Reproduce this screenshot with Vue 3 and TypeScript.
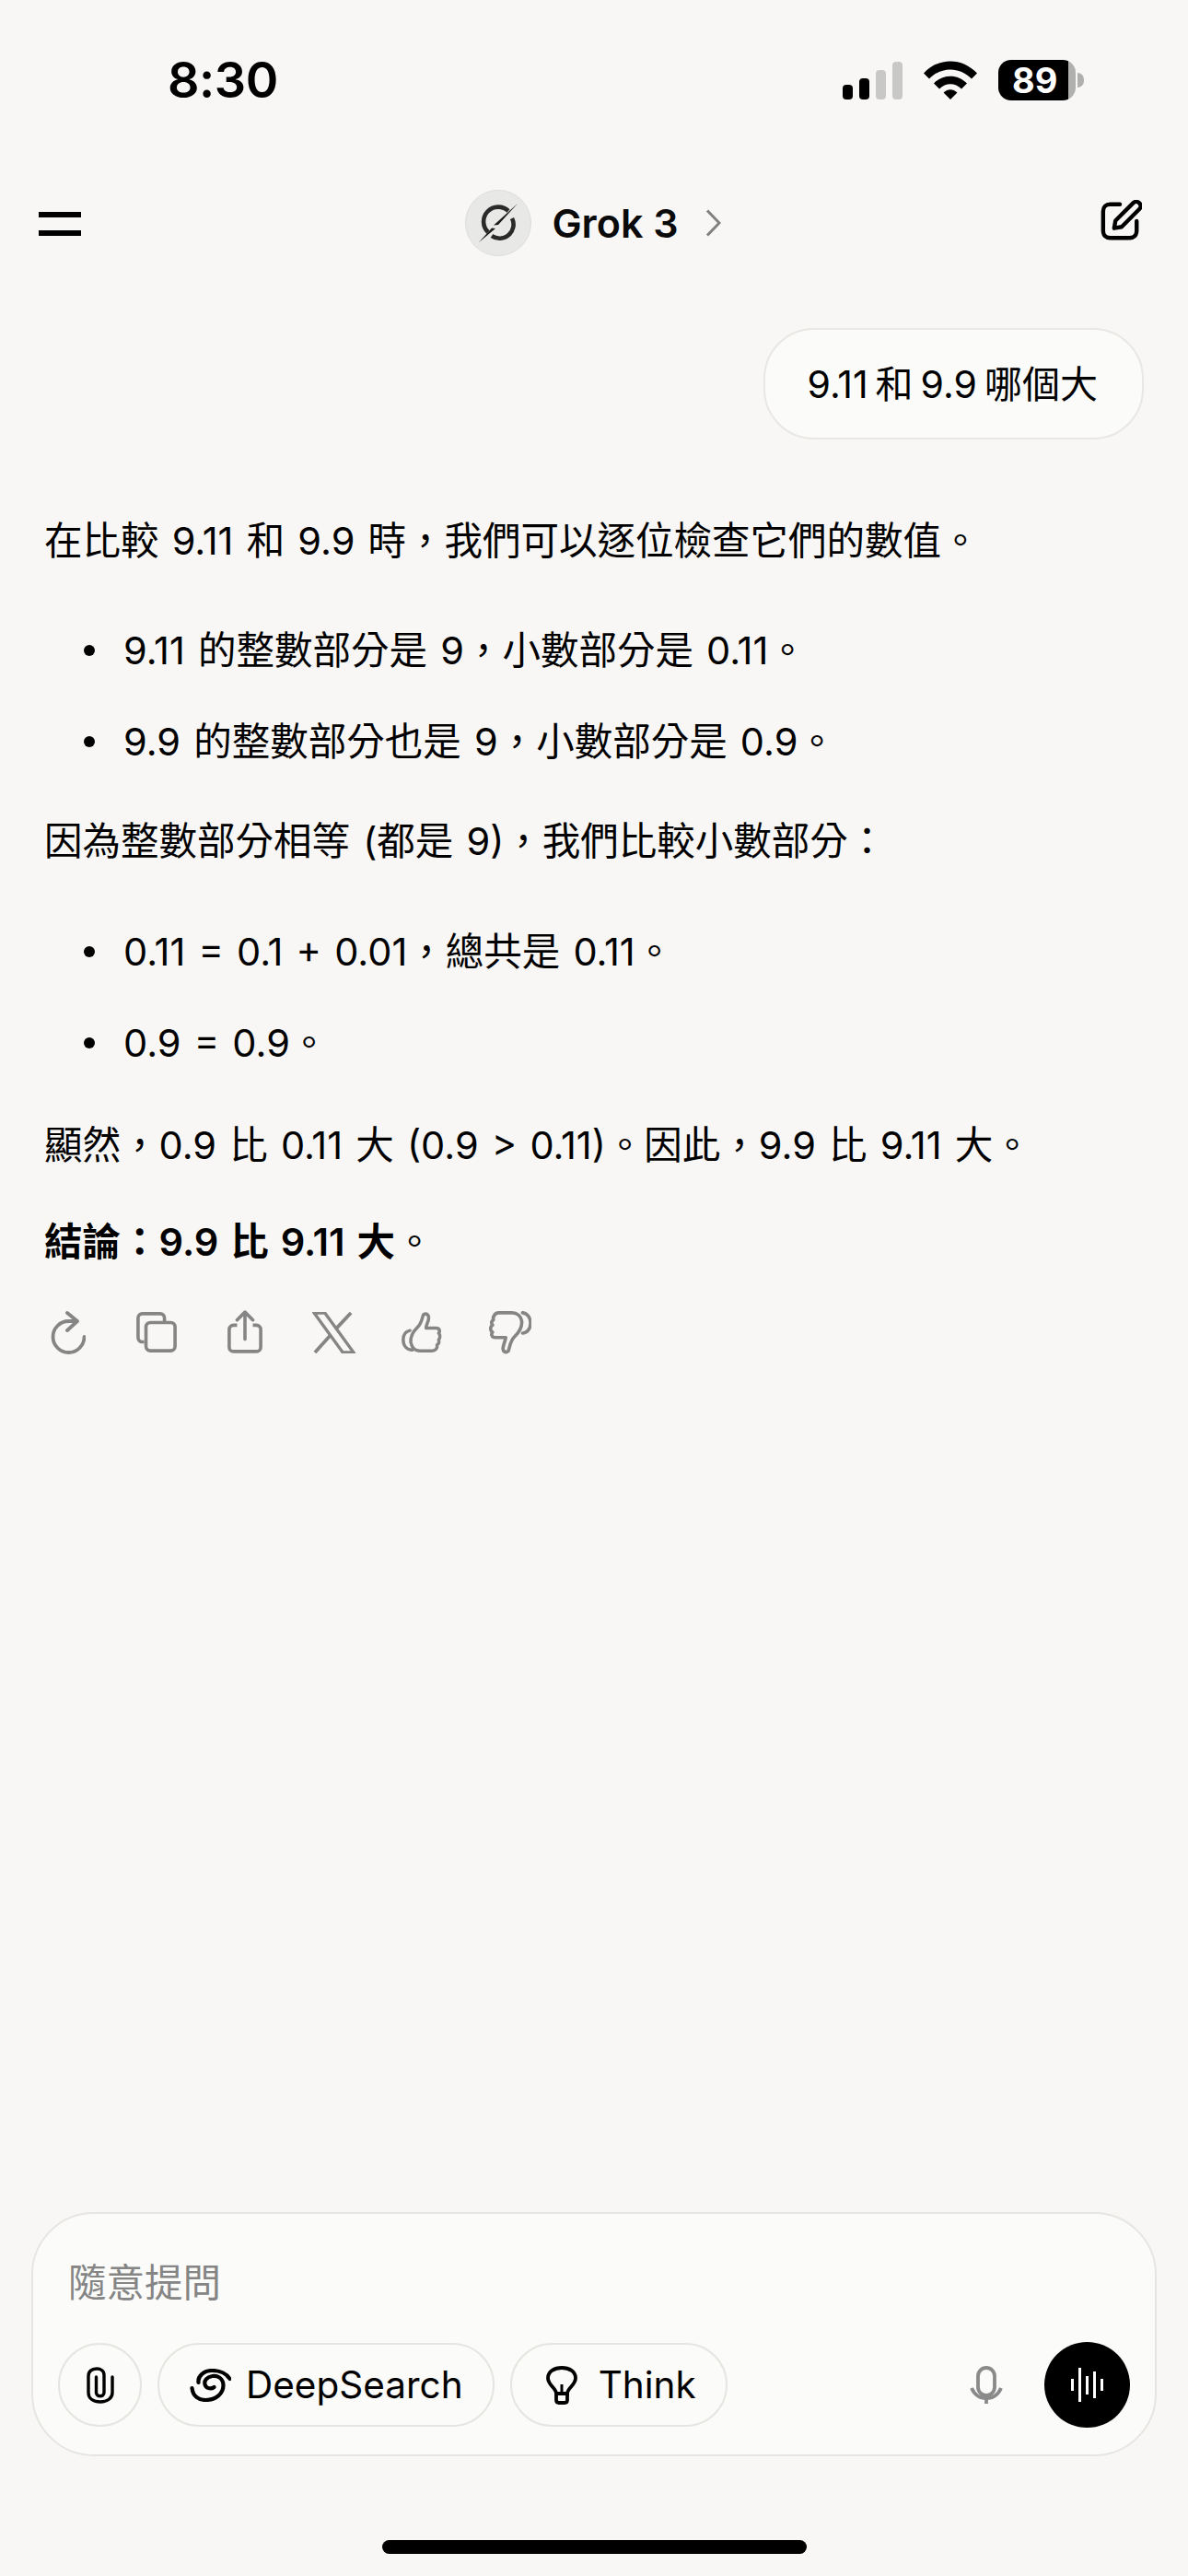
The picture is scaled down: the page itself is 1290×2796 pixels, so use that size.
<script setup lang="ts">
const firstList: string[] = ['9.11 的整數部分是 9，小數部分是 0.11。', '9.9 的整數部分也是 9，小數部分是 0.9。']
const secondList: string[] = ['0.11 = 0.1 + 0.01，總共是 0.11。', '0.9 = 0.9。']
</script>

<template>
  <div class="screen" lang="zh-Hant">
    <div class="status">
      <span class="time">8:30</span>
      <div class="status-icons">
        <svg width="65" height="41" viewBox="0 0 65 41" class="signal">
          <rect x="0" y="25" width="11" height="16" rx="4" fill="#000" />
          <rect x="18" y="18" width="11" height="23" rx="4" fill="#000" />
          <rect x="36" y="9" width="11" height="32" rx="4" fill="#c8c8c6" />
          <rect x="54" y="0" width="11" height="41" rx="4" fill="#c8c8c6" />
        </svg>
        <svg width="58" height="42" viewBox="0 0 58 42" class="wifi">
          <path d="M0 13.5C16 -4 42 -4 58 13.5L52 19.5C39 6 19 6 6 19.5Z" fill="#000" />
          <path d="M11 24.5C21 14 37 14 47 24.5L41 30.5C34 23.5 24 23.5 17 30.5Z" fill="#000" />
          <path d="M21.5 34.5C26 30 32 30 36.5 34.5L29 42Z" fill="#000" />
        </svg>
        <div class="battery">
          <div class="battery-body"><span>89</span></div>
          <i class="battery-cap"></i>
        </div>
      </div>
    </div>

    <div class="nav">
      <div class="menu"><i></i><i></i></div>
      <div class="model">
        <div class="model-logo">
          <svg width="46" height="46" viewBox="0 0 46 46">
            <path d="M34 10A15 15 0 0 0 12 33" fill="none" stroke="#2a2a2a" stroke-width="4.600" />
            <path d="M38 18A15 15 0 0 1 16 37" fill="none" stroke="#2a2a2a" stroke-width="4.600" />
            <path d="M44 2L23 25L18 25.500Z" fill="#1c1c1c" />
            <path d="M2 44L16 28.500L20 29Z" fill="#1c1c1c" />
          </svg>
        </div>
        <span class="model-name">Grok 3</span>
        <svg width="17" height="30" viewBox="0 0 17 30" class="chev">
          <path d="M2 1.500L15 15L2 28.500" fill="none" stroke="#808080" stroke-width="3" />
        </svg>
      </div>
      <svg width="46" height="46" viewBox="0 0 48 48" class="compose">
        <path d="M23 5H12C7 5 4 8 4 13V35C4 40 7 43 12 43H34C39 43 42 40 42 35V24" fill="none" stroke="#000" stroke-width="4.600" stroke-linecap="round" />
        <path d="M38 3.500C40 1.500 43 1.500 45 3.500C47 5.500 47 8.500 45 10.500L25 30.500L16.500 32L18 23.500Z" fill="none" stroke="#000" stroke-width="4.600" stroke-linejoin="round" />
      </svg>
    </div>

    <div class="chat">
      <div class="user-row"><div class="bubble">9.11 和 9.9 哪個大</div></div>
      <div class="answer">
        <p class="p1">在比較 9.11 和 9.9 時，我們可以逐位檢查它們的數值。</p>
        <ul>
          <li v-for="item in firstList" :key="item">{{ item }}</li>
        </ul>
        <p class="p2">因為整數部分相等 (都是 9)，我們比較小數部分：</p>
        <ul>
          <li v-for="item in secondList" :key="item">{{ item }}</li>
        </ul>
        <p class="p3">顯然，0.9 比 0.11 大 (0.9 &gt; 0.11)。因此，9.9 比 9.11 大。</p>
        <p class="p4"><b>結論：9.9 比 9.11 大</b>。</p>
      </div>
      <div class="actions">
        <span class="cell">
          <svg width="38" height="48" viewBox="0 0 38 48">
            <path d="M18 3L29 12L18 22M28 12H19.500A17 17 0 1 0 36.500 29" fill="none" stroke="#858585" stroke-width="3.800" stroke-linecap="round" stroke-linejoin="round" />
          </svg>
        </span>
        <span class="cell">
          <svg width="44" height="44" viewBox="0 0 46 46">
            <path d="M9 34H7C4 34 2 32 2 29V7C2 4 4 2 7 2H27C30 2 32 4 32 7V12" fill="none" stroke="#858585" stroke-width="3.800" />
            <rect x="11" y="12" width="33" height="32" rx="5" fill="none" stroke="#858585" stroke-width="3.800" />
          </svg>
        </span>
        <span class="cell">
          <svg width="38" height="48" viewBox="0 0 40 50">
            <path d="M11 17H7C4 17 2 19 2 22V42C2 45 4 47 7 47H33C36 47 38 45 38 42V22C38 19 36 17 33 17H29" fill="none" stroke="#858585" stroke-width="3.800" />
            <path d="M20 33V3M11 11L20 2L29 11" fill="none" stroke="#858585" stroke-width="3.800" stroke-linecap="round" stroke-linejoin="round" />
          </svg>
        </span>
        <span class="cell">
          <svg width="47" height="45" viewBox="0 0 48 46">
            <path d="M2 1H14L46 45H34Z" fill="none" stroke="#858585" stroke-width="3.400" />
            <path d="M43 1L27 18M20 26L3 45" fill="none" stroke="#858585" stroke-width="3.800" />
          </svg>
        </span>
        <span class="cell">
          <svg width="44" height="46" viewBox="0 0 48 48">
            <path d="M10 22C5 23 2 27 2 33C2 40 6 45 13 45" fill="none" stroke="#858585" stroke-width="3.800" stroke-linecap="round" />
            <path d="M11 36C10 28 15 22 19 18C24 13 24 8 26 3C30 1 33 4 32 9C31 13 29 16 29 19H41C45 19 46 23 44 25C46 27 46 31 44 33C45 36 44 38 42 39C43 43 40 46 36 46H22C16 46 12 42 11 36Z" fill="none" stroke="#858585" stroke-width="3.800" stroke-linejoin="round" />
          </svg>
        </span>
        <span class="cell">
          <svg width="46" height="48" viewBox="0 0 48 50">
            <path d="M38 3C44 4 47 9 47 15C47 21 43 26 38 26" fill="none" stroke="#858585" stroke-width="3.800" stroke-linecap="round" />
            <path d="M37 12C38 20 33 26 29 30C24 35 24 40 22 46C19 49 15 47 16 42C17 37 19 33 19 31H7C3 31 2 27 4 25C1 23 1 19 4 17C2 14 3 12 5 11C4 7 7 3 11 3H26C32 3 36 7 37 12Z" fill="none" stroke="#858585" stroke-width="3.800" stroke-linejoin="round" />
          </svg>
        </span>
      </div>
    </div>

    <div class="composer-wrap">
      <div class="composer">
        <div class="placeholder">隨意提問</div>
        <div class="tools">
          <button class="pill round">
            <svg width="30" height="40" viewBox="0 0 30 40">
              <path d="M10.500 11V28C10.500 33 19 33 19 28V9C19 4.500 15.500 2 11 2C5.500 2 2 5 2 10V28C2 34.500 7.500 38 15 38C22.500 38 28 34 28 28V11" fill="none" stroke="#000" stroke-width="3.400" stroke-linecap="round" />
            </svg>
          </button>
          <button class="pill">
            <svg width="45" height="36" viewBox="0 0 44 36" class="pill-icon">
              <path d="M2 21C3 30 9 34 17 34C28 34 36 27 36 18C36 10 29 7 24 8C18 9 15 13 16 17C17 21 22 23 26 20" fill="none" stroke="#000" stroke-width="4.200" stroke-linecap="round" />
              <path d="M9 15C8 8 15 2 24 2C33 2 40 6 43 11" fill="none" stroke="#000" stroke-width="4.200" stroke-linecap="round" />
            </svg>
            DeepSearch
          </button>
          <button class="pill think">
            <svg width="36" height="42" viewBox="0 0 36 42" class="pill-icon">
              <path d="M12 30C12 24 3 21 3 13C3 6 10 2 18 2C26 2 33 6 33 13C33 21 24 24 24 30Z" fill="none" stroke="#000" stroke-width="3.800" stroke-linejoin="round" />
              <path d="M18 30V20" fill="none" stroke="#000" stroke-width="3" />
              <path d="M12 30H24V37C24 39 23 40 21 40H15C13 40 12 39 12 37Z" fill="none" stroke="#000" stroke-width="3.800" />
            </svg>
            Think
          </button>
          <span class="spacer"></span>
          <svg width="36" height="42" viewBox="0 0 36 42" class="mic">
            <rect x="9" y="2" width="18" height="30" rx="9" fill="none" stroke="#8a8a8a" stroke-width="3.800" />
            <path d="M2 24C5 31 11 35 18 35C25 35 31 31 34 24" fill="none" stroke="#8a8a8a" stroke-width="3.800" />
            <path d="M18 35V41" stroke="#8a8a8a" stroke-width="3.800" />
          </svg>
          <button class="voice" aria-label="voice">
            <i class="b1"></i><i class="b2"></i><i class="b3"></i><i class="b4"></i><i class="b1"></i>
          </button>
        </div>
      </div>
    </div>

    <div class="home-bar"></div>
  </div>
</template>

<style>
html, body { margin: 0; background: #f8f7f5; }
</style>

<style scoped>
.screen {
  width: 1290px;
  height: 2796px;
  background: #f8f7f5;
  color: #000;
  font-family: Inter, "Noto Sans CJK TC", sans-serif;
  display: flex;
  flex-direction: column;
  overflow: hidden;
}
.status {
  height: 172px;
  box-sizing: border-box;
  padding: 60px 113px 0 182px;
  display: flex;
  justify-content: space-between;
  align-items: flex-start;
}
.time { font-size: 54px; font-weight: 600; line-height: 54px; letter-spacing: -0.5px; }
.status-icons { display: flex; align-items: center; gap: 23px; margin-top: 5px; }
.battery { display: flex; align-items: center; }
.battery-body {
  width: 84px; height: 44px; border-radius: 14px;
  background: linear-gradient(90deg, #000 0 90.5%, #b0b0ae 90.5%);
  display: flex; align-items: center; justify-content: flex-start; padding-left: 15px;
  box-sizing: border-box;
  color: #fff; font-size: 38px; font-weight: 700; line-height: 44px;
}
.battery-cap { display: block; width: 7px; height: 16px; margin-left: 2px; background: #b0b0ae; border-radius: 0 8px 8px 0; }

.nav {
  height: 140px;
  padding: 0 50px 0 42px;
  display: flex;
  align-items: flex-start;
  justify-content: space-between;
  box-sizing: border-box;
}
.menu { display: flex; flex-direction: column; gap: 14px; margin-top: 58px; }
.menu i { display: block; width: 46px; height: 6px; background: #000; }
.model { display: flex; align-items: center; margin-top: 34px; margin-left: 6px; }
.model-logo {
  width: 72px; height: 72px; border-radius: 50%;
  background: #e8e8e6; border: 1.500px solid #dcdcda; box-sizing: border-box;
  display: flex; align-items: center; justify-content: center;
}
.model-name { font-size: 43px; font-weight: 600; margin-left: 22px; line-height: 72px; color: #0a0a0a; }
.chev { margin-left: 29px; }
.compose { margin-top: 45px; }

.chat { padding: 44px 0 0 0; flex: 1; }
.user-row { display: flex; justify-content: flex-end; padding-right: 48px; }
.bubble {
  height: 121px; box-sizing: border-box;
  border: 2px solid #e8e7e4; border-radius: 55px;
  background: #fbfbf9;
  padding: 0 48px 5px 46px;
  display: flex; align-items: center;
  font-size: 41px;
  word-spacing: -3.500px;
  white-space: nowrap;
}
.answer { padding: 0 48px; font-size: 41.5px; line-height: 56px; word-spacing: 2.500px; }
.answer p { margin: 0; white-space: nowrap; }
.answer .p1 { margin-top: 82px; }
.answer ul { margin: 0; padding: 0 0 0 43px; list-style: none; }
.answer ul li { white-space: nowrap; display: flex; align-items: center; gap: 31px; }
.answer ul li::before { content: ""; width: 12px; height: 12px; border-radius: 50%; background: #000; flex: none; }
.answer ul li + li { margin-top: 43px; }
.p1 + ul { margin-top: 63px; }
.answer .p2 { margin-top: 52px; }
.p2 + ul { margin-top: 64px; }
.answer .p3 { margin-top: 55px; }
.answer .p4 { margin-top: 49px; font-weight: 400; }
.p4 b { font-weight: 600; }

.actions {
  display: flex; align-items: center;
  padding: 46px 0 0 26px;
}
.cell { width: 96px; height: 48px; display: flex; align-items: center; justify-content: center; flex: none; }

.composer-wrap { padding: 0 34px 0 34px; }
.composer {
  height: 265px; box-sizing: border-box;
  border: 2px solid #e6e5e2; border-radius: 68px;
  background: #fbfbf9;
  padding: 47px 27px 0 27px;
}
.placeholder { font-size: 41.5px; color: #858585; line-height: 56px; padding-left: 11px; }
.tools { display: flex; align-items: center; margin-top: 36px; gap: 17px; }
.pill {
  height: 91px; box-sizing: border-box;
  border: 2px solid #e6e5e2; border-radius: 46px;
  background: transparent;
  font-family: inherit; font-size: 40.500px; color: #000;
  display: flex; align-items: center;
  padding: 0 32px 0 33px;
  white-space: nowrap;
}
.pill.round { width: 91px; padding: 0; justify-content: center; }
.pill-icon { margin-right: 16px; }
.pill.think { padding-left: 36px; }
.pill.think .pill-icon { margin-right: 22px; }
.spacer { flex: 1; }
.mic { margin-right: 28px; }
.voice {
  width: 93px; height: 93px; border-radius: 50%; border: 0; background: #000;
  display: flex; align-items: center; justify-content: center; gap: 4.500px; padding: 0;
}
.voice i { display: block; width: 3.500px; background: #fff; }
.voice .b1 { height: 13px; }
.voice .b2 { height: 37px; }
.voice .b3 { height: 20px; }
.voice .b4 { height: 29px; }

.home-bar {
  width: 461px; height: 15px; border-radius: 8px; background: #000;
  margin: 91px auto 24px;
}
</style>
